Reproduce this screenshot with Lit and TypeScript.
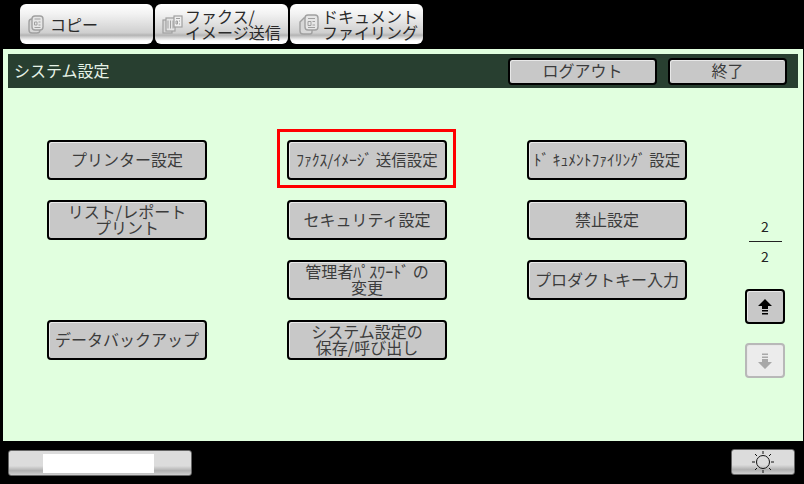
import { LitElement, html, css, svg } from "lit";
import { customElement } from "lit/decorators.js";

const cell = (label: string, on = false, narrow = false) =>
  html`<div class="slot ${on ? "sel" : ""}"><button class="btn ${narrow ? "nar" : ""}">${label}</button></div>`;

const docIcon = (kind: "a" | "b" | "c") => {
  if (kind === "a")
    return html`<svg class="ico" width="16" height="19" viewBox="0 0 16 19" fill="#e6e6e6" stroke="#a0a0a0" stroke-width="1.4">
      <rect x="1" y="4" width="11" height="14" rx="3" fill="#d8d8d8"/><rect x="4" y="1" width="11" height="14" rx="3"/><path d="M6.500 4h6M6.500 7h2.500v3H6.500zM10.500 7h2M10.500 10h2M6.500 12.500h6" stroke-width="1"/></svg>`;
  if (kind === "b")
    return html`<svg class="ico" width="21" height="19" viewBox="0 0 21 19" fill="#e6e6e6" stroke="#a0a0a0" stroke-width="1.2">
      ${svg`<rect x="1" y="5" width="9" height="13" fill="#d8d8d8"/><rect x="4" y="3" width="9" height="13"/><path d="M6 5.500v8M8.500 5.500v8M11 5.500v8" stroke-width="1"/><rect x="12" y="1" width="8" height="11" fill="#efefef"/><path d="M14 3.500h4M14 6h1.500v3H14zM17 6h1M17 9h1" stroke-width="1"/>`}</svg>`;
  return html`<svg class="ico" width="20" height="21" viewBox="0 0 20 21" fill="#e6e6e6" stroke="#a0a0a0" stroke-width="1.4">
    <path d="M1 8l4-4h8v14a2 2 0 0 1-2 2H4a3 3 0 0 1-3-3z" fill="#d8d8d8"/><rect x="6" y="1" width="13" height="15" rx="3"/><path d="M9 4.500h7M9 7.500h3v4H9zM13.500 7.500h2.500M13.500 11h2.500M9 13.500h7" stroke-width="1"/></svg>`;
};

@customElement("app-root")
export class AppRoot extends LitElement {
  static styles = css`
    :host { display: block; width: 804px; height: 484px; background: #000; overflow: hidden;
      font-family: "Noto Sans CJK JP", "DejaVu Sans", sans-serif; }
    .tabs { display: flex; gap: 2px; padding: 4px 0 0 20px; height: 40px; }
    .tab { width: 133px; height: 40px; box-sizing: border-box; border-radius: 6px; display: flex; align-items: center;
      padding-left: 7px; gap: 2px; color: #2a2a2a; font-size: 16px; line-height: 16px;
      background: linear-gradient(#fff 0, #f2f2f2 25%, #cfcfcf 72%, #b4b4b4 78%, #fff 92%, #fff 100%); }
    .tab.one { padding-left: 8px; gap: 6px; }
    .tab.three { padding-left: 9px; gap: 3px; }
    .tab .two { white-space: nowrap; }
    .panel { margin: 5px 0 0 3px; width: 800px; height: 392px; box-sizing: border-box; padding: 5px; background: #e1ffdf; display: flex; flex-direction: column; }
    .head { height: 34px; background: #283f30; display: flex; align-items: center; padding: 0 11px 0 6px; gap: 11px; flex: none; }
    .title { flex: 1; color: #e6f2e6; font-size: 16px; padding-bottom: 3px; }
    .hbtn { height: 27px; box-sizing: border-box; background: #c8c8c8; border: 2px solid #000; box-shadow: inset 1px 1px 0 #e8e8e8;
      border-radius: 4px; font: inherit; font-size: 16px; color: #3c3c3c; padding: 0 0 3px; line-height: 1; }
    .w150 { width: 149px; } .w120 { width: 119px; }
    .body { flex: 1; display: flex; }
    .grid { display: grid; grid-template-columns: repeat(3, 160px); grid-auto-rows: 40px; column-gap: 80px; row-gap: 20px; padding: 52px 0 0 39px; align-content: start; }
    .slot { position: relative; }
    .sel::after { content: ""; position: absolute; left: -10px; top: -11px; width: 179px; height: 59px; box-sizing: border-box; border: 3px solid #f00; }
    .btn { width: 160px; height: 40px; box-sizing: border-box; background: #c8c8c8; border: 2px solid #000; border-radius: 4px; padding: 0 0 2px;
      font: inherit; font-size: 16px; line-height: 16px; color: #3c3c3c; box-shadow: inset 1px 1px 0 #e8e8e8; display: block; white-space: pre-line; }
    .btn.nar { font-size: 15.5px; }
    .side { margin-left: 58px; width: 40px; display: flex; flex-direction: column; align-items: center; padding-top: 128px; }
    .pg { font-size: 14px; line-height: 20px; color: #222; width: 33px; text-align: center; }
    .pg.top { border-bottom: 1px solid #222; padding-bottom: 5px; }
    .pg.bot { padding-top: 4px; }
    .arrow { width: 40px; height: 35px; box-sizing: border-box; border-radius: 4px; border: 2px solid #000; background: #c8c8c8; padding: 0; display: flex; align-items: center; justify-content: center; box-shadow: inset 1px 1px 0 #e8e8e8; }
    .arrow.up { margin-top: 23px; }
    .arrow.down { margin-top: 19px; border-color: #b8b8b8; background: #ececec; }
    .foot { display: flex; justify-content: space-between; padding: 8px 9px 0 8px; }
    .bar, .sun { height: 26px; box-sizing: border-box; border: 1px solid #666; border-radius: 3px; display: flex; justify-content: center;
      background: linear-gradient(#dcdcdc 0, #dcdcdc 62%, #b0b0b0 82%, #cfcfcf 100%); }
    .bar { width: 184px; margin-top: 1px; padding: 3px 0; }
    .fill { width: 111px; height: 19px; background: #fff; margin-left: -4px; }
    .sun { width: 64px; align-items: center; }
  `;

  render() {
    return html`
      <div class="tabs">
        <div class="tab one">${docIcon("a")}<span>コピー</span></div>
        <div class="tab">${docIcon("b")}<span class="two">ファクス/<br />イメージ送信</span></div>
        <div class="tab three">${docIcon("c")}<span class="two">ドキュメント<br />ファイリング</span></div>
      </div>
      <div class="panel">
        <div class="head">
          <div class="title">システム設定</div>
          <button class="hbtn w150">ログアウト</button>
          <button class="hbtn w120">終了</button>
        </div>
        <div class="body">
          <div class="grid">
            ${cell("プリンター設定")}
            ${cell("ﾌｧｸｽ/ｲﾒｰｼﾞ 送信設定", true, true)}
            ${cell("ﾄﾞ ｷｭﾒﾝﾄﾌｧｲﾘﾝｸﾞ 設定", false, true)}
            ${cell("リスト/レポート\nプリント")}
            ${cell("セキュリティ設定")}
            ${cell("禁止設定")}
            <div></div>
            ${cell("管理者ﾊﾟｽﾜｰﾄﾞ の\n変更")}
            ${cell("プロダクトキー入力")}
            ${cell("データバックアップ")}
            ${cell("システム設定の\n保存/呼び出し")}
          </div>
          <div class="side">
            <div class="pg top">2</div>
            <div class="pg bot">2</div>
            <button class="arrow up"><svg width="16" height="18" viewBox="0 0 16 18" fill="#000"><path d="M8 1l7 7h-4v3H5V8H1zM5 12h6v1.500H5zM5 15h6v1.500H5z"/></svg></button>
            <button class="arrow down"><svg width="16" height="18" viewBox="0 0 16 18" fill="#a8a8a8"><path d="M5 1.500h6V3H5zM5 4.500h6V6H5zM5 7h6v3h4l-7 7-7-7h4z"/></svg></button>
          </div>
        </div>
      </div>
      <div class="foot">
        <div class="bar"><div class="fill"></div></div>
        <div class="sun">
          <svg width="24" height="24" viewBox="0 0 24 24" fill="none" stroke="#111" stroke-width="1"><circle cx="12" cy="12" r="6.500"/><path d="M12 1v3M12 20v3M1 12h3M20 12h3M4 4l2 2M18 18l2 2M20 4l-2 2M6 18l-2 2"/></svg>
        </div>
      </div>
    `;
  }
}
